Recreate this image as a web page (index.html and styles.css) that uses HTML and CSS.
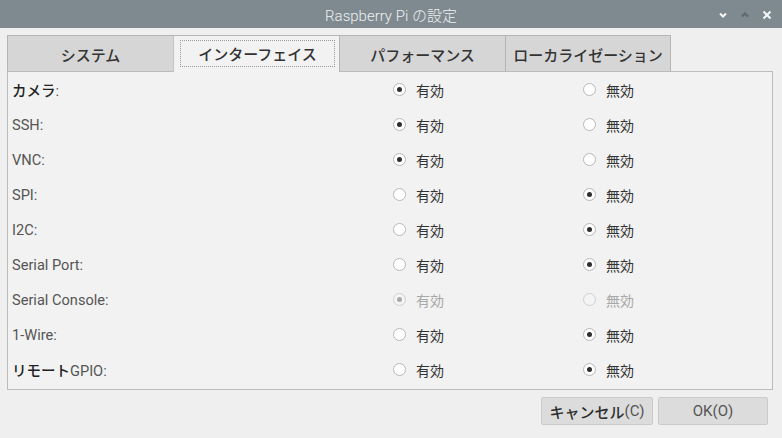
FILE: index.html
```html
<!DOCTYPE html>
<html lang="ja">
<head>
<meta charset="utf-8">
<title>Raspberry Pi の設定</title>
<link rel="stylesheet" href="styles.css">
</head>
<body>
<div class="window">
  <div class="titlebar">
    <div class="title">Raspberry Pi の設定</div>
    <div class="controls">
      <svg class="ctl" width="12" height="12" viewBox="0 0 12 12"><path d="M3 4.5 L6 7.5 L9 4.5" fill="none" stroke="#f4f6f7" stroke-width="2"/></svg>
      <svg class="ctl" width="12" height="12" viewBox="0 0 12 12"><path d="M3 7.5 L6 4.5 L9 7.5" fill="none" stroke="#5d676e" stroke-width="2"/></svg>
      <svg class="ctl" width="12" height="12" viewBox="0 0 12 12"><path d="M2.5 2.5 L9.5 9.5 M9.5 2.5 L2.5 9.5" fill="none" stroke="#f4f6f7" stroke-width="2"/></svg>
    </div>
  </div>
  <div class="body">
    <div class="tabs">
      <div class="tab">システム</div>
      <div class="tab active"><span class="focus">インターフェイス</span></div>
      <div class="tab">パフォーマンス</div>
      <div class="tab">ローカライゼーション</div>
    </div>
    <div class="panel">
      <div class="row"><div class="label"><span class="jp">カメラ</span>:</div><div class="opt"><span class="radio on"></span>有効</div><div class="opt"><span class="radio"></span>無効</div></div>
      <div class="row"><div class="label">SSH:</div><div class="opt"><span class="radio on"></span>有効</div><div class="opt"><span class="radio"></span>無効</div></div>
      <div class="row"><div class="label">VNC:</div><div class="opt"><span class="radio on"></span>有効</div><div class="opt"><span class="radio"></span>無効</div></div>
      <div class="row"><div class="label">SPI:</div><div class="opt"><span class="radio"></span>有効</div><div class="opt"><span class="radio on"></span>無効</div></div>
      <div class="row"><div class="label">I2C:</div><div class="opt"><span class="radio"></span>有効</div><div class="opt"><span class="radio on"></span>無効</div></div>
      <div class="row"><div class="label">Serial Port:</div><div class="opt"><span class="radio"></span>有効</div><div class="opt"><span class="radio on"></span>無効</div></div>
      <div class="row"><div class="label">Serial Console:</div><div class="opt disabled"><span class="radio on"></span>有効</div><div class="opt disabled"><span class="radio"></span>無効</div></div>
      <div class="row"><div class="label">1-Wire:</div><div class="opt"><span class="radio"></span>有効</div><div class="opt"><span class="radio on"></span>無効</div></div>
      <div class="row"><div class="label"><span class="jp">リモート</span>GPIO:</div><div class="opt"><span class="radio"></span>有効</div><div class="opt"><span class="radio on"></span>無効</div></div>
    </div>
    <div class="footer">
      <button class="btn cancel"><span class="jpb">キャンセル</span>(C)</button>
      <button class="btn ok">OK(O)</button>
    </div>
  </div>
</div>
</body>
</html>
```
FILE: styles.css
```css
html, body {
  margin: 0;
  padding: 0;
}
body {
  width: 782px;
  height: 438px;
  overflow: hidden;
  background: #efefef;
  font-family: Roboto, "Noto Sans CJK JP", sans-serif;
  font-size: 14px;
  color: #3a3a3a;
}
.window {
  width: 782px;
  height: 438px;
  display: flex;
  flex-direction: column;
}
.titlebar {
  height: 28px;
  background: #7f8990;
  display: flex;
  align-items: center;
  justify-content: center;
  position: relative;
}
.title {
  color: #eef1f2;
  font-size: 15px;
  font-weight: 300;
  font-family: Roboto, "Noto Sans CJK JP", sans-serif;
  padding-top: 1px;
}
.controls {
  position: absolute;
  right: 9px;
  top: 9px;
  display: flex;
  gap: 10px;
}
.ctl { display: block; }
.body {
  flex: 1;
  padding: 7px 9px 0 7px;
  display: flex;
  flex-direction: column;
}
.tabs {
  display: flex;
  height: 36px;
}
.tab {
  width: 166px;
  box-sizing: border-box;
  height: 36px;
  background: #d6d6d6;
  border: 1px solid #b4b4b4;
  border-bottom: none;
  border-right: none;
  display: flex;
  align-items: center;
  justify-content: center;
  font-family: "Noto Sans CJK JP", sans-serif;
  font-weight: 500;
  font-size: 15px;
  color: #333;
  padding-top: 1px;
}
.tab:last-child {
  border-right: 1px solid #b4b4b4;
}
.tab.active {
  background: #f2f2f2;
  border-left: 1px solid #c4c4c4;
  position: relative;
  z-index: 1;
  height: 37px;
  margin-bottom: -1px;
}
.tab.active + .tab {
  border-left: 1px solid #b4b4b4;
}
.focus {
  width: 155px;
  height: 27px;
  box-sizing: border-box;
  border: 1px dotted #9a9a9a;
  display: flex;
  align-items: center;
  justify-content: center;
  margin-left: 2px;
  margin-bottom: 2px;
}
.panel {
  width: 766px;
  box-sizing: border-box;
  border: 1px solid #bcbcbc;
  background: #f2f2f2;
  padding: 0 0 2px 4px;
}
.row {
  height: 35px;
  display: grid;
  grid-template-columns: 380px 190px 1fr;
  align-items: center;
}
.label {
  color: #555;
  font-size: 14.6px;
}
.label .jp {
  color: #222;
  font-family: "Noto Sans CJK JP", sans-serif;
  font-weight: 500;
  font-size: 14.5px;
}
.opt {
  display: flex;
  align-items: center;
  font-family: "Noto Sans CJK JP", sans-serif;
  font-size: 14px;
  color: #333;
}
.radio {
  width: 13px;
  height: 13px;
  box-sizing: border-box;
  border-radius: 50%;
  border: 1px solid #b8b8b8;
  background: #ffffff;
  margin-left: 1px;
  margin-right: 10px;
  display: flex;
  align-items: center;
  justify-content: center;
}
.radio.on::after {
  content: "";
  width: 5px;
  height: 5px;
  border-radius: 50%;
  background: #2e2e2e;
}
.opt.disabled {
  color: #a8a8a8;
}
.opt.disabled .radio {
  border-color: #d0d0d0;
  background: #f4f4f4;
}
.opt.disabled .radio.on::after {
  background: #a8a8a8;
}
.footer {
  display: flex;
  justify-content: flex-end;
  gap: 5px;
  padding-top: 7px;
  padding-right: 5px;
}
.btn {
  height: 28px;
  box-sizing: border-box;
  background: #dcdcdc;
  border: 1px solid #cbcbcb;
  border-radius: 2px;
  font-family: Roboto, "Noto Sans CJK JP", sans-serif;
  font-size: 15px;
  color: #555;
  padding: 0;
  display: flex;
  align-items: center;
  justify-content: center;
}
.btn.cancel { width: 112px; }
.btn.ok { width: 110px; }
.jpb {
  font-family: "Noto Sans CJK JP", sans-serif;
  font-weight: 500;
  color: #2e2e2e;
}
```
